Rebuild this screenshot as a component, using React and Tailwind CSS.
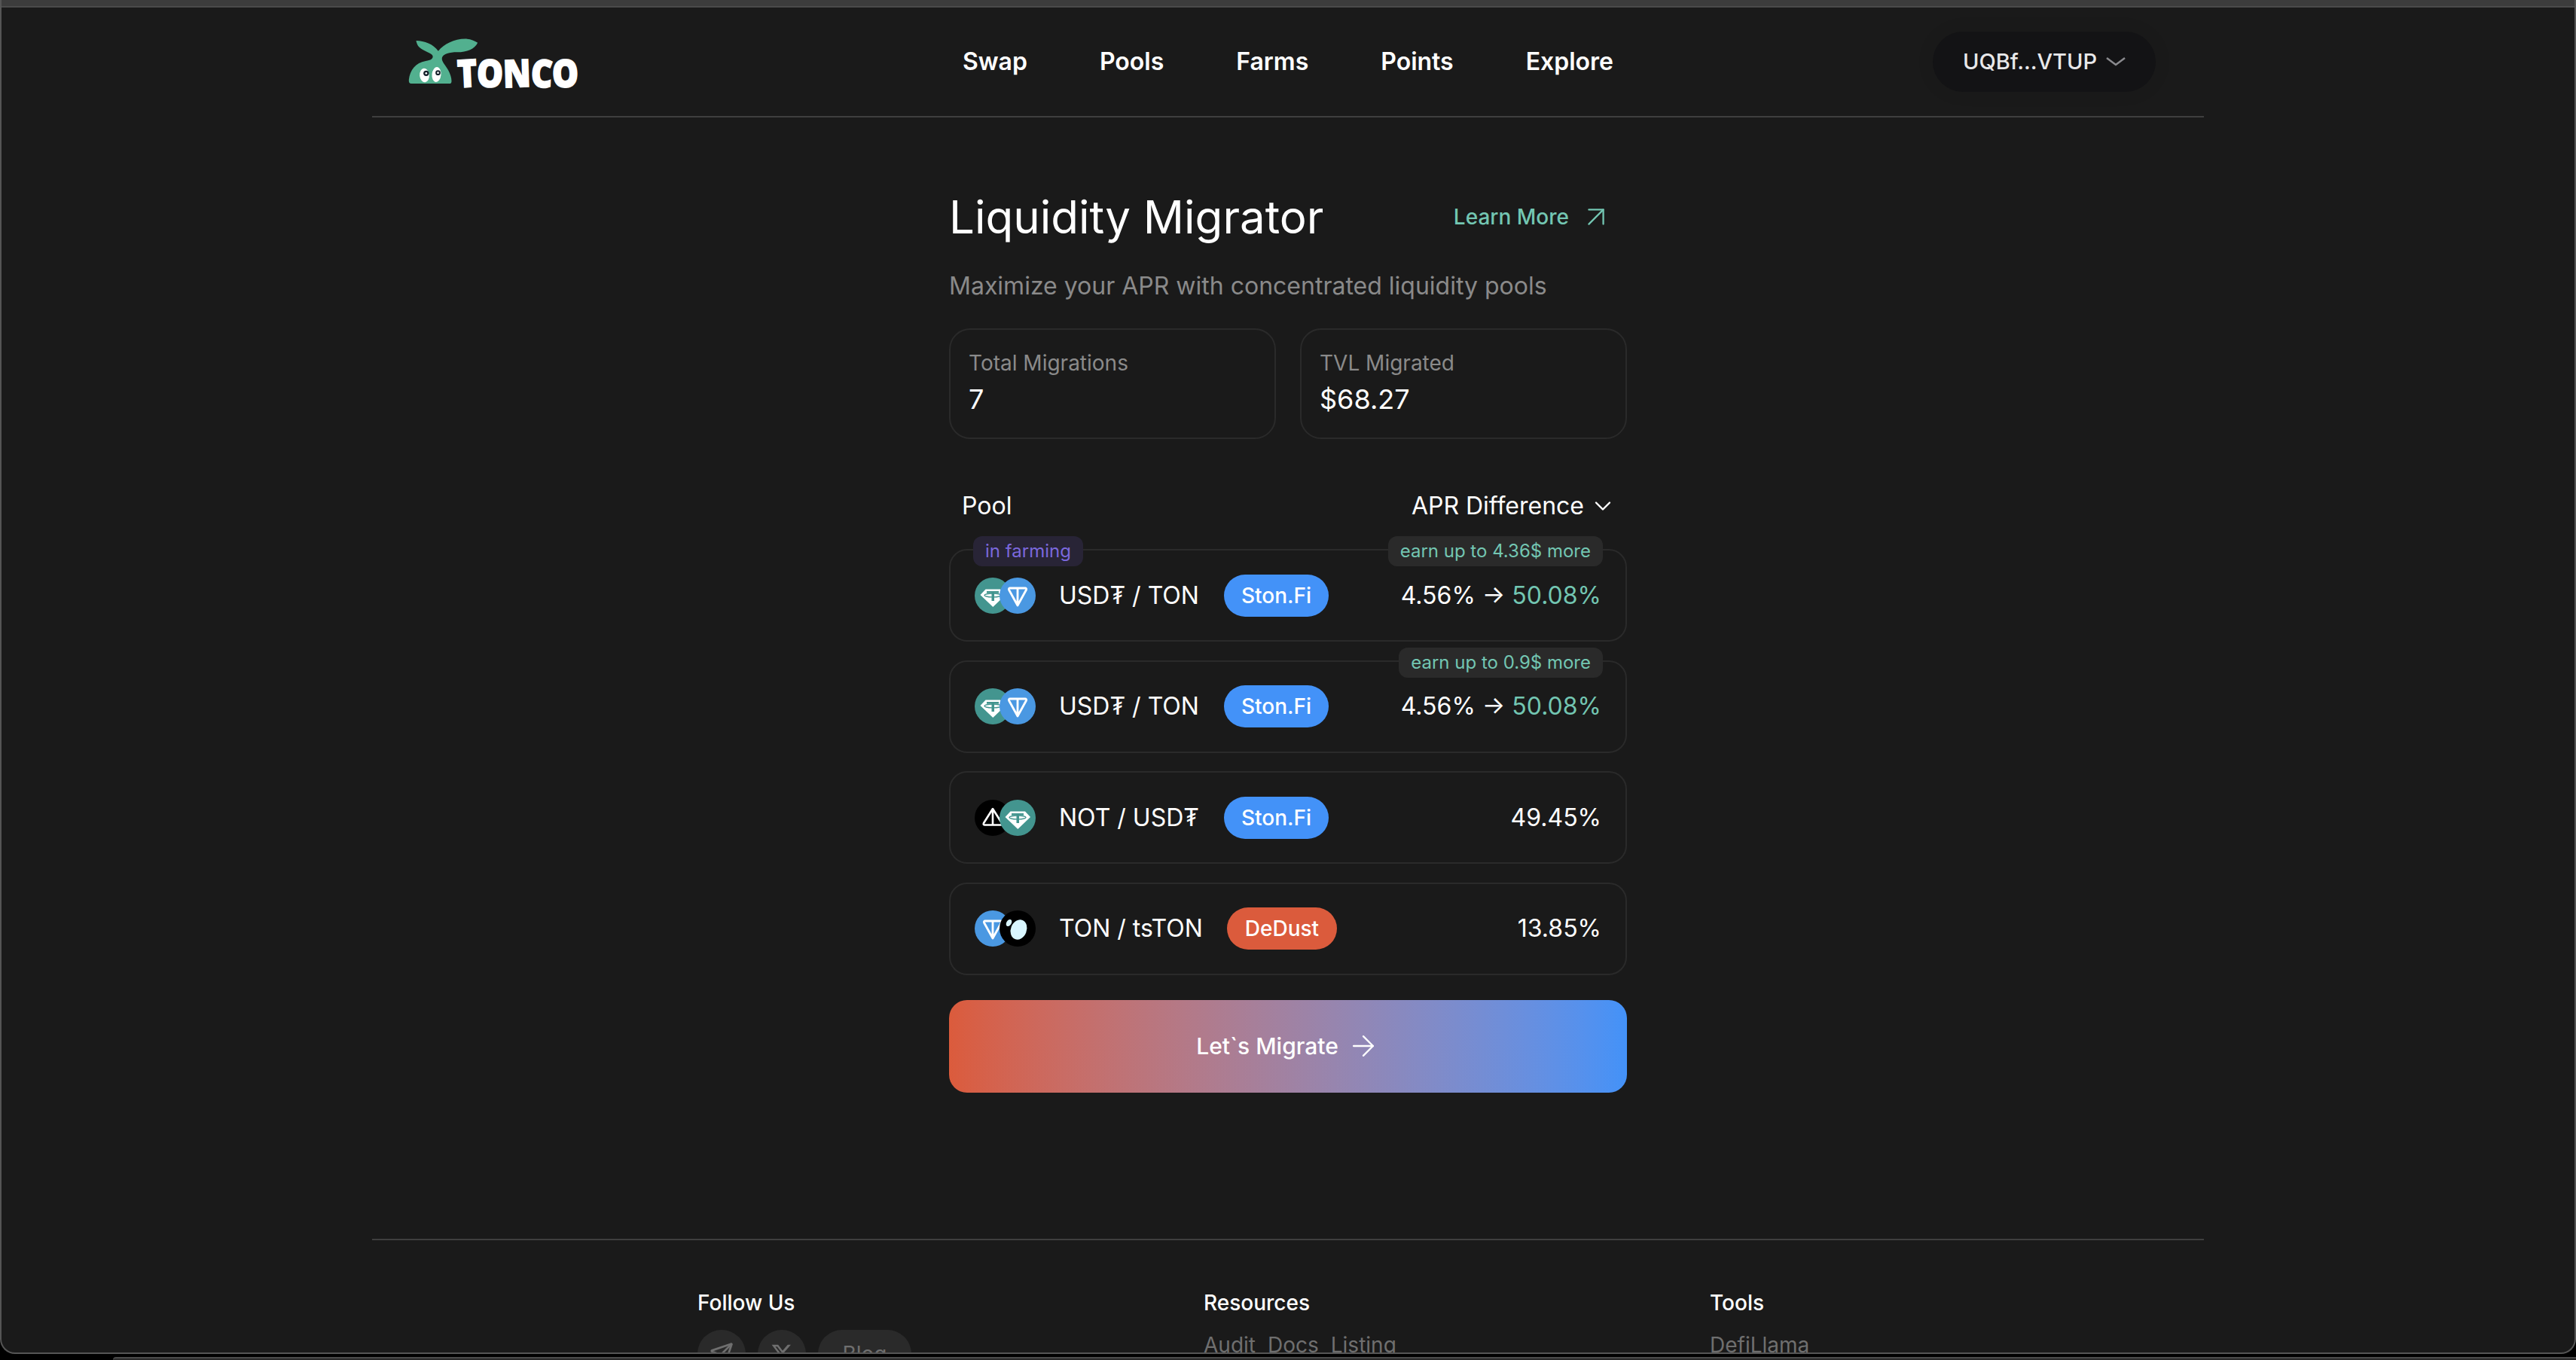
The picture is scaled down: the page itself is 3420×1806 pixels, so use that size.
import { ArrowRight, ArrowUpRight, ChevronDown, Send } from "lucide-react";
import { FaXTwitter } from "react-icons/fa6";

function Logo() {
  return (
    <div className="flex items-end">
      <svg width="97" height="65" viewBox="60 55 290 195" className="shrink-0">
        <path
          d="M78 238C70 238 67 232 68 222 72 185 95 155 135 148 155 145 165 140 163 128 160 115 125 110 108 92 102 85 98 75 97 67 130 68 165 80 185 108 210 80 250 58 300 60 315 61 330 68 342 75 330 100 300 113 260 113 230 113 205 120 200 135 197 150 215 165 225 185 233 200 238 215 238 228 238 235 235 238 230 238Z"
          fill="#52b08f"
        />
        <ellipse cx="130" cy="205" rx="19" ry="28" fill="#fff" transform="rotate(-6 130 205)" />
        <ellipse cx="178" cy="202" rx="18" ry="30" fill="#fff" transform="rotate(6 178 202)" />
        <circle cx="137" cy="197" r="11" fill="#15202b" />
        <circle cx="137" cy="197" r="4" fill="#fff" />
        <circle cx="184" cy="195" r="10" fill="#15202b" />
        <circle cx="184" cy="195" r="4" fill="#fff" />
      </svg>
      <div className="flex items-center -ml-[30px] -mb-[5px] h-[48px] scale-y-[1.15] text-white font-black text-[44px] leading-[48px] [-webkit-text-stroke:1.5px_white] font-['Open_Sans',sans-serif]">
        <span className="-rotate-3">T</span>
        <span className="rotate-2">O</span>
        <span className="-rotate-2">N</span>
        <span className="rotate-3">C</span>
        <span className="-rotate-2">O</span>
      </div>
    </div>
  );
}

function Tether() {
  return (
    <svg width="48" height="48" viewBox="0 0 48 48" className="block">
      <circle cx="24" cy="24" r="24" fill="#43958f" />
      <path d="M14.500 15.500H34L41 23 24.300 39 7.500 23Z" fill="#fff" strokeLinejoin="round" />
      <path d="M16 18H32V20.800H26V31H22.500V20.800H16Z" fill="#43958f" />
      <ellipse cx="24" cy="23.500" rx="11" ry="2.400" fill="none" stroke="#43958f" strokeWidth="1.400" />
    </svg>
  );
}

function Ton() {
  return (
    <svg width="48" height="48" viewBox="0 0 48 48" className="block">
      <circle cx="24" cy="24" r="24" fill="#4a98e2" />
      <path
        d="M14 14H34C35.500 14 36 15.200 35.500 16.200L24 37 12.500 16.200C12 15.200 12.500 14 14 14ZM24 14V37"
        fill="none"
        stroke="#fff"
        strokeWidth="2.800"
        strokeLinejoin="round"
      />
    </svg>
  );
}

function Not() {
  return (
    <svg width="48" height="48" viewBox="0 0 48 48" className="block">
      <circle cx="24" cy="24" r="24" fill="#000" />
      <path
        d="M24 12 36 31C36.800 32.500 36 33.500 34.500 33.500H13.500C12 33.500 11.200 32.500 12 31ZM24 12V33.500"
        fill="none"
        stroke="#fff"
        strokeWidth="2.600"
        strokeLinejoin="round"
      />
    </svg>
  );
}

function TsTon() {
  return (
    <svg width="48" height="48" viewBox="0 0 48 48" className="block">
      <circle cx="24" cy="24" r="24" fill="#000" />
      <ellipse cx="25.500" cy="25.500" rx="10.500" ry="13.500" fill="#d9f6ff" transform="rotate(22 25.500 25.500)" />
      <ellipse cx="12.500" cy="16.500" rx="3.200" ry="5" fill="#d9f6ff" transform="rotate(32 12.500 16.500)" />
    </svg>
  );
}

function PoolRow({ first, second, name, dex, children, farming, earn }) {
  return (
    <div className="relative flex items-center justify-between h-[123px] pl-[32px] pr-[32px] border-2 border-[#2a2a2a] rounded-[24px]">
      {farming && (
        <div className="absolute left-[30px] -top-[19px] h-[40px] px-[16px] flex items-center rounded-[12px] bg-[#282436] text-[#7b68dd] text-[24px]">
          in farming
        </div>
      )}
      {earn && (
        <div className="absolute right-[30px] -top-[19px] h-[40px] px-[16px] flex items-center rounded-[12px] bg-[#2a2a2a] text-[#73c6b2] text-[24px]">
          {earn}
        </div>
      )}
      <div className="flex items-center">
        <div className="flex items-center">
          {first}
          <div className="-ml-[15px]">{second}</div>
        </div>
        <span className="ml-[31px] text-white text-[32px]">{name}</span>
        <span
          className={
            dex === "DeDust"
              ? "ml-[32px] h-[56px] px-[24px] flex items-center rounded-full bg-[#db5b3c] text-white text-[28px] font-medium"
              : "ml-[33px] h-[56px] px-[23px] flex items-center rounded-full bg-[#4392f8] text-white text-[28px] font-medium"
          }
        >
          {dex}
        </span>
      </div>
      <div className="text-white text-[32px]">{children}</div>
    </div>
  );
}

function App() {
  const nav = ["Swap", "Pools", "Farms", "Points", "Explore"];

  return (
    <div className="w-[3420px] h-[1806px] bg-black overflow-hidden font-[Inter,sans-serif]">
      <div className="h-[1798px] flex flex-col overflow-hidden bg-[#1a1a1a] border-x-2 border-b-2 border-[#555555] rounded-b-[20px]">
        <div className="h-[10px] shrink-0 bg-[#3c3c3c] border-b-2 border-[#4a4a4a]" />

        <div className="w-[2432px] mx-auto flex flex-col flex-1 min-h-0">
          <header className="h-[146px] shrink-0 grid grid-cols-[1fr_auto_1fr] items-center pl-[46px] pr-[46px] border-b-2 border-[#3f3f3f]">
            <Logo />
            <nav className="flex items-center gap-[96px]">
              {nav.map((item) => (
                <a key={item} className="text-white text-[32px] font-semibold">
                  {item}
                </a>
              ))}
            </nav>
            <div className="justify-self-end mr-[18px] flex items-center gap-[12px] h-[80px] w-[296px] pl-[40px] rounded-full bg-[#131315] shadow-[0_0_24px_rgba(0,0,0,0.08)] text-[#e8e8ea] text-[29px] font-medium">
              UQBf...VTUP
              <svg width="26" height="12" viewBox="0 0 26 12" fill="none" stroke="#8a8a8e" strokeWidth="2.500">
                <path d="M1 1 13 10 25 1" />
              </svg>
            </div>
          </header>

          <main className="h-[1489px] shrink-0 flex justify-center">
            <div className="w-[900px] pt-[96px]">
              <div className="flex items-center justify-between pr-[18px]">
                <h1 className="text-white text-[60px] leading-[72px]">Liquidity Migrator</h1>
                <a className="flex items-center gap-[13px] text-[#73c6b2] text-[28px] font-medium">
                  Learn More
                  <ArrowUpRight size={46} strokeWidth={1.2} />
                </a>
              </div>
              <p className="mt-[32px] text-[#8a8a8a] text-[32px] leading-[48px]">
                Maximize your APR with concentrated liquidity pools
              </p>

              <div className="mt-[32px] grid grid-cols-2 gap-[32px]">
                <div className="h-[147px] px-[24px] pt-[24px] border-2 border-[#2a2a2a] rounded-[28px]">
                  <div className="text-[#8a8a8a] text-[28px] leading-[40px]">Total Migrations</div>
                  <div className="mt-[4px] text-white text-[36px] leading-[48px]">7</div>
                </div>
                <div className="h-[147px] px-[24px] pt-[24px] border-2 border-[#2a2a2a] rounded-[28px]">
                  <div className="text-[#8a8a8a] text-[28px] leading-[40px]">TVL Migrated</div>
                  <div className="mt-[4px] text-white text-[36px] leading-[48px]">$68.27</div>
                </div>
              </div>

              <div className="mt-[65px] flex items-center justify-between pl-[17px] pr-[14px] h-[48px] text-white text-[32px]">
                <span>Pool</span>
                <span className="flex items-center gap-[7px]">
                  APR Difference
                  <ChevronDown size={36} strokeWidth={1.600} />
                </span>
              </div>

              <div className="mt-[33px] flex flex-col gap-[24.5px]">
                <PoolRow first={<Tether />} second={<Ton />} name="USD₮ / TON" dex="Ston.Fi" farming earn="earn up to 4.36$ more">
                  4.56% → <span className="text-[#73c6b2]">50.08%</span>
                </PoolRow>
                <PoolRow first={<Tether />} second={<Ton />} name="USD₮ / TON" dex="Ston.Fi" earn="earn up to 0.9$ more">
                  4.56% → <span className="text-[#73c6b2]">50.08%</span>
                </PoolRow>
                <PoolRow first={<Not />} second={<Tether />} name="NOT / USD₮" dex="Ston.Fi">
                  49.45%
                </PoolRow>
                <PoolRow first={<Ton />} second={<TsTon />} name="TON / tsTON" dex="DeDust">
                  13.85%
                </PoolRow>
              </div>

              <button className="mt-[33px] w-full h-[123px] flex items-center justify-center gap-[11px] rounded-[24px] bg-linear-to-r from-[#db5b3c] to-[#4392f8] text-white text-[30px] font-medium">
                Let`s Migrate
                <ArrowRight size={44} strokeWidth={1.300} />
              </button>
            </div>
          </main>

          <footer className="border-t-2 border-[#3f3f3f] pl-[432px] pt-[63px] grid grid-cols-[672px_672px_1fr] text-[28px]">
            <div>
              <div className="text-white font-medium leading-[40px]">Follow Us</div>
              <div className="mt-[16px] flex gap-[16px] text-[#6f6f6f]">
                <div className="w-[64px] h-[64px] rounded-full bg-[#2a2a2a] flex items-center justify-center">
                  <Send size={32} />
                </div>
                <div className="w-[64px] h-[64px] rounded-full bg-[#2a2a2a] flex items-center justify-center">
                  <FaXTwitter size={30} />
                </div>
                <div className="w-[124px] h-[64px] rounded-full bg-[#2a2a2a] flex items-center justify-center">
                  Blog
                </div>
              </div>
            </div>
            <div>
              <div className="text-white font-medium leading-[40px]">Resources</div>
              <div className="mt-[16px] flex gap-[16px] text-[#6f6f6f] leading-[40px]">
                <span>Audit</span>
                <span>Docs</span>
                <span>Listing</span>
              </div>
            </div>
            <div>
              <div className="text-white font-medium leading-[40px]">Tools</div>
              <div className="mt-[16px] text-[#6f6f6f] leading-[40px]">DefiLlama</div>
            </div>
          </footer>
        </div>
      </div>
      <div className="mt-[4px] ml-[150px] h-[4px] bg-[#2a2a2a] border-t-2 border-[#4a4a4a] rounded-tl-[16px]" />
    </div>
  );
}

export default App;
